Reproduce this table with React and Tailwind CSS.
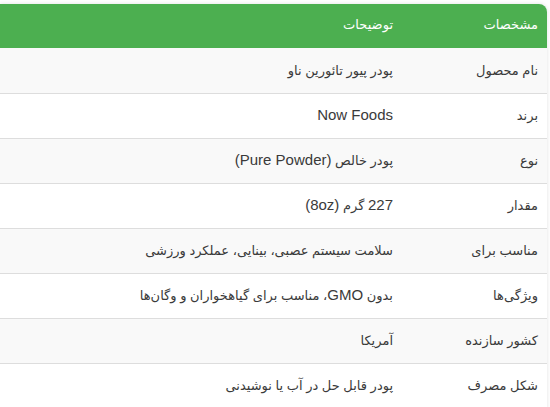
import React from "react";

const L = ({ children }) => <span className="text-[15px]">{children}</span>;

const rows = [
  ["نام محصول", "پودر پیور تائورین ناو"],
  ["برند", <L>Now Foods</L>],
  ["نوع", <>پودر خالص <L>(Pure Powder)</L></>],
  ["مقدار", <><L>227</L> گرم <L>(8oz)</L></>],
  ["مناسب برای", "سلامت سیستم عصبی، بینایی، عملکرد ورزشی"],
  ["ویژگی‌ها", <>بدون <L>GMO</L>، مناسب برای گیاهخواران و وگان‌ها</>],
  ["کشور سازنده", "آمریکا"],
  ["شکل مصرف", "پودر قابل حل در آب یا نوشیدنی"],
];

export default function App() {
  return (
    <div className="w-[550px] h-[407px] overflow-hidden bg-white pt-[4px]" style={{ fontFamily: '"Liberation Sans", "DejaVu Sans", sans-serif' }}>
      <div className="w-[547px] rounded-tr-[8px] overflow-hidden shadow-[0_0_4px_rgba(0,0,0,0.12)]">
        <table dir="rtl" className="w-full border-collapse text-[13px] text-[#3a3a3a]">
          <thead>
            <tr className="bg-[#4caf50] text-white h-[44px]">
              <th className="w-[145px] px-[9px] pb-[3px] text-right font-normal">مشخصات</th>
              <th className="px-[9px] pb-[3px] text-right font-normal">توضیحات</th>
            </tr>
          </thead>
          <tbody>
            {rows.map(([k, v], i) => (
              <tr key={i} className={`h-[45px] border-b border-[#dddddd] ${i % 2 === 0 ? "bg-[#f9f9f9]" : "bg-white"}`}>
                <td className="px-[9px] text-right">{k}</td>
                <td className="px-[9px] text-right">{v}</td>
              </tr>
            ))}
          </tbody>
        </table>
      </div>
    </div>
  );
}
